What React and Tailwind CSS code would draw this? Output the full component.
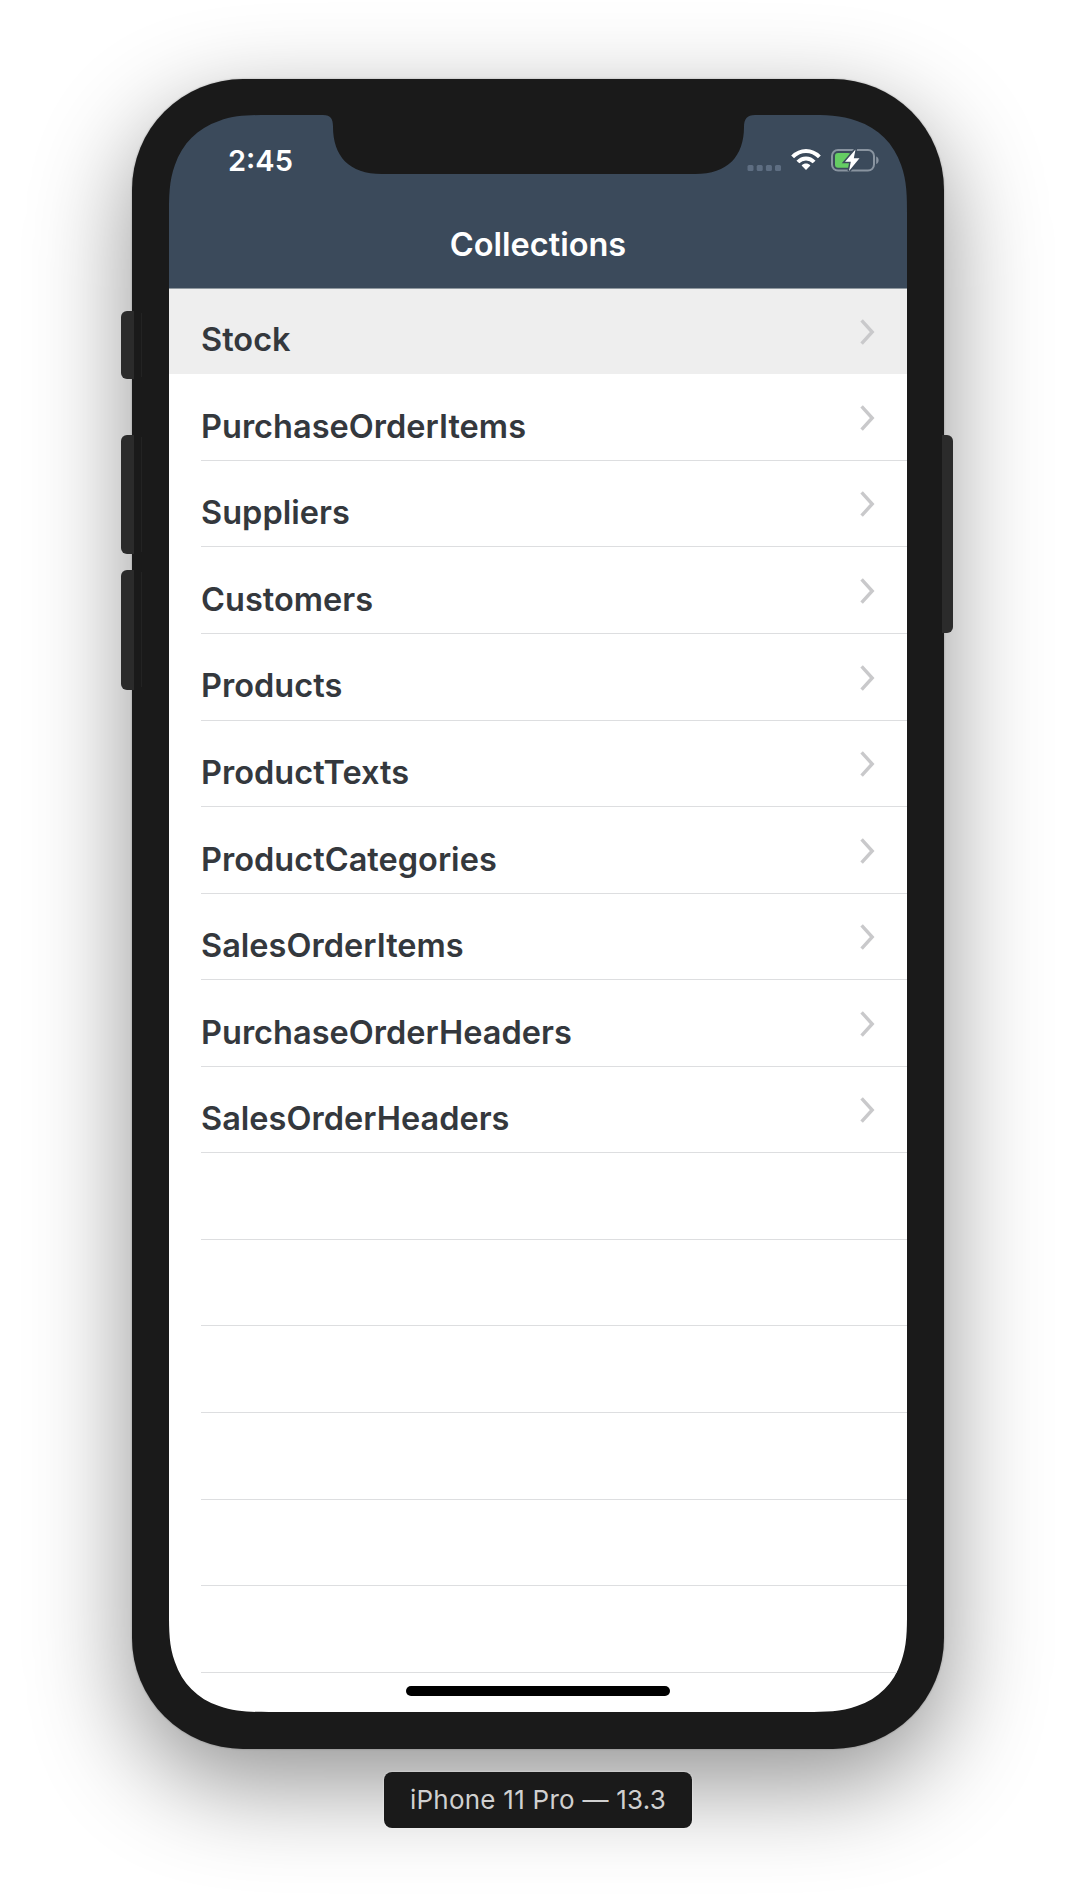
const collections = [
  "Stock",
  "PurchaseOrderItems",
  "Suppliers",
  "Customers",
  "Products",
  "ProductTexts",
  "ProductCategories",
  "SalesOrderItems",
  "PurchaseOrderHeaders",
  "SalesOrderHeaders",
];
const emptyRows = [0, 1, 2, 3, 4, 5];

function Chevron() {
  return (
    <svg className="mt-[29.5px] mr-[31px] h-[28px] w-[17px] shrink-0" viewBox="0 0 17 28" fill="none">
      <path d="M2.6 2.3 13.2 14 2.6 25.7" stroke="#c9c9cb" strokeWidth="3.4" />
    </svg>
  );
}

function Label({ children }) {
  return (
    <span className="pt-[32.4px] text-[32.5px] leading-[40px] font-[580] tracking-[0.02px] text-[#34383d]">{children}</span>
  );
}

function Row({ label }) {
  return (
    <li className="h-[86.55px] pl-8">
      <div className="flex h-full items-start justify-between border-b border-[#dddee0]">
        {label && (
          <>
            <Label>{label}</Label>
            <Chevron />
          </>
        )}
      </div>
    </li>
  );
}

function Notch() {
  return (
    <svg className="absolute top-0 left-[154px] h-[59px] w-[432px]" viewBox="0 0 432 59">
      <path
        d="M0 0H432C424 0 421 4 421 12C421 41 405 59 372 59H59C26 59 10 41 10 12C10 4 8 0 0 0Z"
        fill="#1a1a1a"
      />
    </svg>
  );
}

function StatusIcons() {
  return (
    <svg className="h-[28px] w-[136px]" viewBox="0 0 136 28" fill="none">
      <g fill="#65748a" fillOpacity="0.85">
        <rect x="1.5" y="19" width="6" height="6" rx="1.5" />
        <rect x="10.7" y="19" width="6" height="6" rx="1.5" />
        <rect x="19.9" y="19" width="6" height="6" rx="1.5" />
        <rect x="29" y="19" width="6" height="6" rx="1.5" />
      </g>
      <g stroke="#fff" strokeWidth="4">
        <path d="M46.6 10.8C54.5 2.9 65.5 2.9 73.4 10.8" />
        <path d="M51.9 16C56.4 11.2 63.6 11.2 68.1 16" />
      </g>
      <path d="M55.6 19.4C58.2 17 61.8 17 64.4 19.4L60 24Z" fill="#fff" />
      <rect x="86" y="4" width="42" height="20.6" rx="6" stroke="#8994a0" strokeWidth="2" />
      <path d="M130.2 10.5C133.4 11.4 133.4 17 130.2 18Z" fill="#8994a0" />
      <rect x="89" y="7" width="16" height="14.8" rx="3" fill="#65cd63" />
      <path d="M109.5 3.5 99 15.8H104.8L103 25 113.5 12.3H107.8Z" fill="#fff" stroke="#3b4a5b" strokeWidth="3" paintOrder="stroke" />
    </svg>
  );
}

function SideButton({ className }) {
  return <div className={`absolute bg-[#2b2b2b] ${className}`} />;
}

export default function App() {
  return (
    <main className="flex h-[1900px] w-[1076px] flex-col items-center overflow-hidden bg-white pt-[79px] font-[Inter,sans-serif]">
      <div className="relative h-[1670px] w-[812px] shrink-0 rounded-[111px] bg-[#1a1a1a] px-[37px] pt-[36px] shadow-[0_0_2px_rgba(0,0,0,0.3),0_34px_100px_rgba(0,0,0,0.43)]">
        <SideButton className="top-[232px] left-[-11px] h-[68px] w-[13px] rounded-l-[6px]" />
        <SideButton className="top-[356px] left-[-11px] h-[119px] w-[13px] rounded-l-[6px]" />
        <SideButton className="top-[491px] left-[-11px] h-[120px] w-[13px] rounded-l-[6px]" />
        <SideButton className="top-[234px] left-[9px] h-[64px] w-px opacity-50" />
        <SideButton className="top-[358px] left-[9px] h-[115px] w-px opacity-50" />
        <SideButton className="top-[493px] left-[9px] h-[115px] w-px opacity-50" />
        <SideButton className="top-[356px] right-[-9px] h-[198px] w-[11px] rounded-r-[6px]" />

        <div className="relative flex h-[1597px] w-[738px] flex-col [clip-path:path('M100_0H638C656_0_672_0_688_5.9C709.5_13.2_724.8_28.5_732.1_50C738_66_738_82_738_100V1497C738_1515_738_1531_732.1_1547C724.8_1568.5_709.5_1583.8_688_1591.1C672_1597_656_1597_638_1597H100C82_1597_66_1597_50_1591.1C28.5_1583.8_13.2_1568.5_5.9_1547C0_1531_0_1515_0_1497V100C0_82_0_66_5.9_50C13.2_28.5_28.5_13.2_50_5.9C66_0_82_0_100_0Z')]">
          <header className="flex h-[174px] shrink-0 flex-col border-b border-[#8f989f] bg-[#3b4a5b] text-white">
            <div className="flex h-[86px] items-start justify-between pt-[26px] pr-[25px] pl-[59px]">
              <span className="text-[29px] leading-[40px] font-[580]">2:45</span>
              <div className="pt-[5px]">
                <StatusIcons />
              </div>
            </div>
            <h1 className="pt-[23.5px] text-center text-[32.5px] leading-[40px] font-[580]">Collections</h1>
          </header>
          <ul className="grow bg-white">
            <li className="flex h-[85.4px] items-start justify-between bg-[#eeeeee] pl-8">
              <div className="-mt-px flex grow items-start justify-between">
                <Label>{collections[0]}</Label>
                <Chevron />
              </div>
            </li>
            {collections.slice(1).map((name) => (
              <Row key={name} label={name} />
            ))}
            {emptyRows.map((row) => (
              <Row key={row} />
            ))}
          </ul>
          <Notch />
          <div className="absolute bottom-[16px] left-[237px] h-[10px] w-[264px] rounded-full bg-black" />
        </div>
      </div>
      <div className="relative mt-[23px] flex h-[56px] w-[308px] shrink-0 items-center justify-center rounded-[8px] bg-[#1a1a1a] pb-0.5 text-[26px] tracking-[0.25px] text-[#d0d0d0] shadow-[0_0_2px_rgba(255,255,255,0.7)]">
        iPhone 11 Pro — 13.3
      </div>
    </main>
  );
}
